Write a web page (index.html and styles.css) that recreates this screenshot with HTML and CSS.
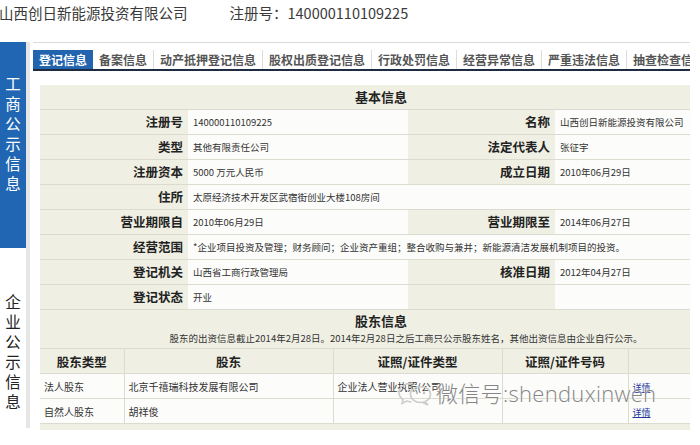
FILE: index.html
```html
<!DOCTYPE html>
<html lang="zh-CN">
<head>
<meta charset="utf-8">
<title>山西创日新能源投资有限公司</title>
<link rel="stylesheet" href="styles.css">
</head>
<body>
<div class="page">
  <header class="topbar"><span class="company">山西创日新能源投资有限公司</span><span class="regno">注册号：140000110109225</span></header>
  <div class="main">
    <aside class="sidebar">
      <div class="side-blue">
        <span class="vchar">工</span><span class="vchar">商</span><span class="vchar">公</span><span class="vchar">示</span><span class="vchar">信</span><span class="vchar">息</span>
      </div>
      <div class="side-white">
        <span class="vchar">企</span><span class="vchar">业</span><span class="vchar">公</span><span class="vchar">示</span><span class="vchar">信</span><span class="vchar">息</span>
      </div>
    </aside>
    <section class="content">
      <nav class="tabs">
        <span class="tab active">登记信息</span>
        <span class="tab">备案信息</span>
        <span class="tab">动产抵押登记信息</span>
        <span class="tab">股权出质登记信息</span>
        <span class="tab">行政处罚信息</span>
        <span class="tab">经营异常信息</span>
        <span class="tab">严重违法信息</span>
        <span class="tab">抽查检查信息</span>
      </nav>
      <div class="panel">
        <div class="sec-title">基本信息</div>
        <div class="info-grid">
          <div class="lbl">注册号</div><div class="val">140000110109225</div><div class="lbl">名称</div><div class="val">山西创日新能源投资有限公司</div>
          <div class="lbl">类型</div><div class="val">其他有限责任公司</div><div class="lbl">法定代表人</div><div class="val">张征宇</div>
          <div class="lbl">注册资本</div><div class="val">5000 万元人民币</div><div class="lbl">成立日期</div><div class="val">2010年06月29日</div>
          <div class="lbl">住所</div><div class="val span3">太原经济技术开发区武宿街创业大楼108房间</div>
          <div class="lbl">营业期限自</div><div class="val">2010年06月29日</div><div class="lbl">营业期限至</div><div class="val">2014年06月27日</div>
          <div class="lbl">经营范围</div><div class="val span3">*企业项目投资及管理；财务顾问；企业资产重组；整合收购与兼并；新能源清洁发展机制项目的投资。</div>
          <div class="lbl">登记机关</div><div class="val">山西省工商行政管理局</div><div class="lbl">核准日期</div><div class="val">2012年04月27日</div>
          <div class="lbl">登记状态</div><div class="val">开业</div><div class="lbl"></div><div class="val"></div>
        </div>
        <div class="sec-title2">股东信息</div>
        <div class="note">股东的出资信息截止2014年2月28日。2014年2月28日之后工商只公示股东姓名，其他出资信息由企业自行公示。</div>
        <table class="holders">
          <colgroup><col class="c1"><col class="c2"><col class="c3"><col class="c4"><col class="c5"></colgroup>
          <tr><th>股东类型</th><th>股东</th><th>证照/证件类型</th><th>证照/证件号码</th><th></th></tr>
          <tr><td>法人股东</td><td>北京千禧瑞科技发展有限公司</td><td>企业法人营业执照(公司)</td><td></td><td><a class="detail">详情</a></td></tr>
          <tr><td>自然人股东</td><td>胡祥俊</td><td></td><td></td><td><a class="detail">详情</a></td></tr>
        </table>
      </div>
    </section>
  </div>
  <div class="watermark">
    <svg class="wx-icon" width="38" height="28" viewBox="0 0 38 28">
      <path d="M17 4.5C10 3.5 3 7.5 3 13.5c0 3 1.6 5.4 4 7L6 24.5l4.6-2.4c1.6.5 3.2.7 4.9.6" fill="none" stroke="#cdcdcd" stroke-width="1.6"/>
      <ellipse cx="24.5" cy="15.5" rx="10" ry="8" fill="none" stroke="#cdcdcd" stroke-width="1.6"/>
      <path d="M29 22.5l3 3.5-5-2.2" fill="none" stroke="#cdcdcd" stroke-width="1.4"/>
      <circle cx="21" cy="14" r="1.2" fill="#c0c0c0"/>
      <circle cx="28" cy="14" r="1.2" fill="#c0c0c0"/>
    </svg>
    <span class="wx-text">微信号:shenduxinwen</span>
  </div>
</div>
</body>
</html>
```
FILE: styles.css
```css
* { box-sizing: border-box; margin: 0; padding: 0; }
html, body { width: 700px; height: 445px; overflow: hidden; background: #fff; }
body { font-family: "Noto Sans CJK SC", "Noto Sans", sans-serif; color: #333; }
.page { position: relative; width: 700px; height: 445px; }

.topbar { height: 42px; line-height: 26px; font-size: 14.5px; color: #3a3a3a; white-space: nowrap; margin-left: -1px; }
.regno { margin-left: 42px; }

.main { display: flex; align-items: flex-start; }
.sidebar { width: 30px; height: 386px; border-right: 4px solid #e6e6e6; display: flex; flex-direction: column; }
.side-blue { height: 206px; background: #2066b2; color: #fff; padding-top: 31px; }
.side-white { flex: 1; padding-top: 43px; color: #222; }
.vchar { display: block; height: 20px; text-align: center; font-size: 15.5px; line-height: 20px; }

.content { margin-left: 3px; width: 657px; }
.tabs { display: flex; border-top: 1px solid #dadada; padding-top: 7px; border-bottom: 2px solid #1d2c40; white-space: nowrap; overflow: hidden; }
.tab { padding: 0 6px; font-size: 12px; font-weight: bold; line-height: 19px; color: #555; border-right: 1px solid #dddddd; flex: none; }
.tab.active { background: #2264ae; color: #fff; border-right: none; }

.panel { margin: 14px 0 0 7px; width: 650px; background: #efefe3; padding-bottom: 6px; }
.sec-title { height: 25px; line-height: 24px; border-bottom: 1px solid #dbdbcf; text-align: center; padding-left: 32px; font-size: 13px; font-weight: bold; color: #222; }

.info-grid { display: grid; grid-template-columns: 148px 220px 147px 135px; }
.info-grid > div { height: 25px; line-height: 24px; border-bottom: 1px solid #dbdbcf; white-space: nowrap; overflow: hidden; }
.lbl { text-align: right; padding-right: 5px; font-size: 12.5px; font-weight: bold; color: #222; }
.val { background: #fcfcfa; padding-left: 5px; font-size: 9.5px; color: #333; }
.span3 { grid-column: span 3; }

.sec-title2 { height: 22px; line-height: 22px; text-align: center; padding-left: 32px; font-size: 13px; font-weight: bold; color: #222; }
.note { height: 12px; line-height: 12px; font-size: 9.5px; text-align: center; padding-left: 82px; color: #333; margin-bottom: 4px; white-space: nowrap; }

.holders { width: 650px; table-layout: fixed; border-collapse: collapse; }
.c1 { width: 84px; } .c2 { width: 209px; } .c3 { width: 169px; } .c4 { width: 126px; } .c5 { width: 62px; }
.holders tr { height: 25px; }
.holders th, .holders td { border: 1px solid #dbdbcf; white-space: nowrap; overflow: hidden; }
.holders tr > :first-child { border-left: none; }
.holders tr > :last-child { border-right: none; }
.holders th { background: #efefe3; font-size: 12.5px; font-weight: bold; color: #222; text-align: center; }
.holders td { background: #fcfcfa; font-size: 10px; color: #333; padding-left: 4px; }
.detail { font-size: 9px; color: #23379a; text-decoration: underline; }

.watermark { position: absolute; left: 396px; top: 379px; display: flex; align-items: center; }
.wx-icon { flex: none; }
.wx-text { margin-left: 2px; font-family: "Open Sans", "Noto Sans CJK SC", sans-serif; font-weight: 300; font-size: 22px; line-height: 28px; color: #858585; text-shadow: 0 0 2px #fff, 0 0 2px #fff; letter-spacing: 0.3px; }
```
